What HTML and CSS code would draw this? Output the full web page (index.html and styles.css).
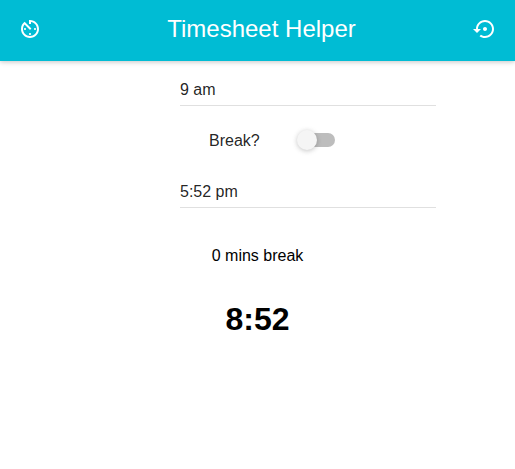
FILE: index.html
```html
<!DOCTYPE html>
<html lang="en">
<head>
<meta charset="utf-8">
<title>Timesheet Helper</title>
<link rel="stylesheet" href="styles.css">
</head>
<body>
<header class="app-bar">
  <button class="icon-button" aria-label="Set timer"><svg viewBox="0 0 24 24"><path d="M11 17c0 .55.45 1 1 1s1-.45 1-1-.45-1-1-1-1 .45-1 1zm0-14v4h2V5.08c3.39.49 6 3.39 6 6.92 0 3.87-3.13 7-7 7s-7-3.13-7-7c0-1.68.59-3.22 1.58-4.42L12 13l1.41-1.41-6.8-6.8v.02C4.42 6.45 3 9.05 3 12c0 4.97 4.02 9 9 9 4.97 0 9-4.03 9-9s-4.03-9-9-9h-1zm7 9c0-.55-.45-1-1-1s-1 .45-1 1 .45 1 1 1 1-.45 1-1zM6 12c0 .55.45 1 1 1s1-.45 1-1-.45-1-1-1-1 .45-1 1z"/></svg></button>
  <h1 class="title">Timesheet Helper</h1>
  <button class="icon-button" aria-label="Reset"><svg viewBox="0 0 24 24"><path d="M14 12c0-1.1-.9-2-2-2s-2 .9-2 2 .9 2 2 2 2-.9 2-2zm-2-9c-4.97 0-9 4.03-9 9H0l4 4 4-4H5c0-3.87 3.13-7 7-7s7 3.13 7 7-3.13 7-7 7c-1.51 0-2.91-.49-4.06-1.3l-1.42 1.44C8.04 20.3 9.94 21 12 21c4.97 0 9-4.03 9-9s-4.03-9-9-9z"/></svg></button>
</header>
<main class="sheet">
  <div class="field">9 am</div>
  <div class="break-row"><span class="break-label">Break?</span><span class="toggle"><span class="thumb"></span></span></div>
  <div class="field">5:52 pm</div>
  <p class="summary">0 mins break</p>
  <p class="total">8:52</p>
</main>
</body>
</html>
```
FILE: styles.css
```css
* { box-sizing: border-box; }
body { margin: 0; background: #fff; color: #000; font: 16px/20px "Liberation Sans", Arial, sans-serif; }
.app-bar { display: flex; align-items: center; height: 61px; padding: 0 18px 3px; background: #00bcd4; color: #fff; box-shadow: 0 1px 6px rgba(0,0,0,.12), 0 1px 4px rgba(0,0,0,.12); }
.icon-button { flex: none; width: 24px; height: 24px; padding: 0; border: 0; background: none; color: inherit; }
.icon-button svg { display: block; width: 100%; height: 100%; fill: currentColor; }
.title { flex: 1; margin: 0; padding: 0 0 1px 8px; font-size: 24px; font-weight: 400; line-height: 28px; text-align: center; }
.sheet { padding-top: 9px; }
.field { width: 256px; height: 36px; margin-left: 180px; padding-top: 10px; border-bottom: 1px solid #e0e0e0; color: rgba(0,0,0,.87); }
.break-row { display: flex; align-items: center; width: 126px; height: 66px; margin-left: 209px; justify-content: space-between; padding-top: 2px; color: rgba(0,0,0,.87); }
.break-label { padding-top: 2px; }
.toggle { display: flex; align-items: center; width: 36px; height: 14px; border-radius: 7px; background: #bdbdbd; }
.thumb { flex: none; width: 20px; height: 20px; margin-left: -2px; border-radius: 50%; background: #f5f5f5; box-shadow: 0 1px 6px rgba(0,0,0,.12), 0 1px 4px rgba(0,0,0,.12); }
.summary { margin: 38px 0 0; text-align: center; }
.total { margin: 34px 0 0; font-size: 32px; font-weight: 700; line-height: 38px; text-align: center; }
```
